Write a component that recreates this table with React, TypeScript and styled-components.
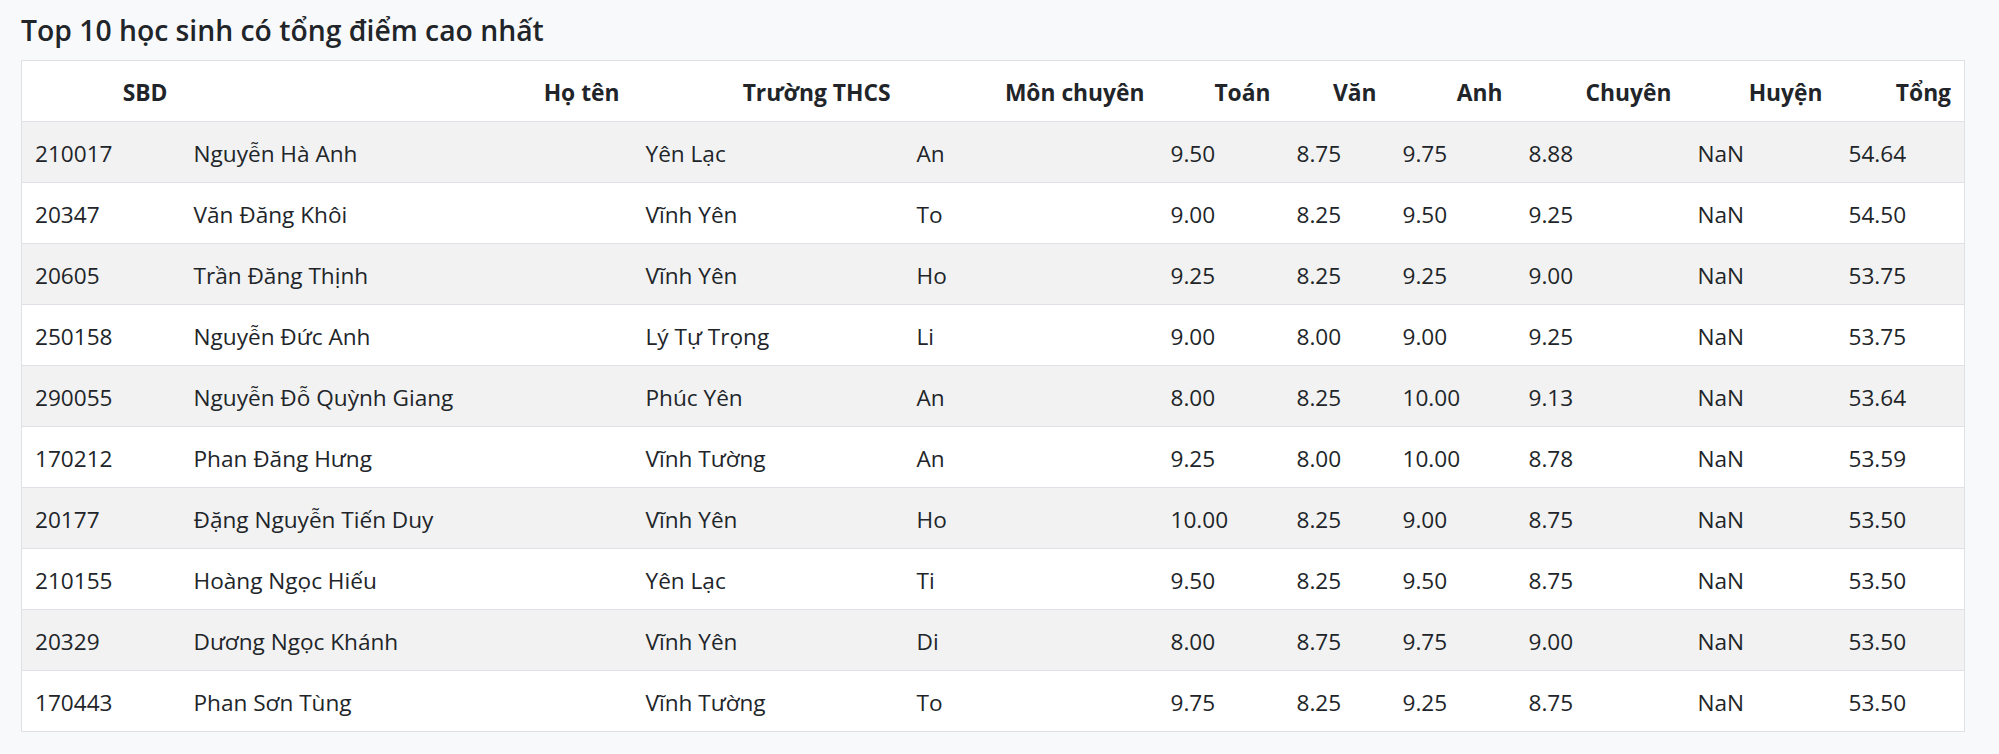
import React from "react";
import styled, { createGlobalStyle } from "styled-components";

const GlobalStyle = createGlobalStyle`
  html, body {
    margin: 0;
    padding: 0;
    background: #f8f9fa;
  }
  body {
    font-family: "Open Sans", "Noto Sans", sans-serif;
    color: #212529;
  }
`;

const Page = styled.main`
  padding: 10px 35px 23px 21px;
  background: #f8f9fa;
`;

const Title = styled.h2`
  margin: 0 0 9px 0;
  font-family: "Open Sans", "Noto Sans", sans-serif;
  font-size: 28.3px;
  font-weight: 600;
  line-height: 41px;
  color: #212529;
`;

const Table = styled.table`
  width: 1943px;
  border-collapse: collapse;
  table-layout: fixed;
  background: #ffffff;
  border: 1px solid #dee2e6;
`;

const HeadCell = styled.th`
  box-sizing: border-box;
  height: 61px;
  padding: 2px 13px 0 13px;
  text-align: right;
  font-size: 22.8px;
  font-weight: 700;
  vertical-align: middle;
  border-bottom: 1px solid #dee2e6;
  white-space: nowrap;
`;

const Row = styled.tr`
  &:nth-of-type(odd) {
    background: #f2f2f2;
  }
`;

const Cell = styled.td`
  box-sizing: border-box;
  height: 61px;
  padding: 2px 13px 0 13px;
  text-align: left;
  font-size: 22.6px;
  font-weight: 400;
  vertical-align: middle;
  border-bottom: 1px solid #dee2e6;
  white-space: nowrap;
`;

const columns: { label: string; width: number }[] = [
  { label: "SBD", width: 159 },
  { label: "Họ tên", width: 452 },
  { label: "Trường THCS", width: 271 },
  { label: "Môn chuyên", width: 254 },
  { label: "Toán", width: 126 },
  { label: "Văn", width: 106 },
  { label: "Anh", width: 126 },
  { label: "Chuyên", width: 169 },
  { label: "Huyện", width: 151 },
  { label: "Tổng", width: 129 },
];

const rows: string[][] = [
  ["210017", "Nguyễn Hà Anh", "Yên Lạc", "An", "9.50", "8.75", "9.75", "8.88", "NaN", "54.64"],
  ["20347", "Văn Đăng Khôi", "Vĩnh Yên", "To", "9.00", "8.25", "9.50", "9.25", "NaN", "54.50"],
  ["20605", "Trần Đăng Thịnh", "Vĩnh Yên", "Ho", "9.25", "8.25", "9.25", "9.00", "NaN", "53.75"],
  ["250158", "Nguyễn Đức Anh", "Lý Tự Trọng", "Li", "9.00", "8.00", "9.00", "9.25", "NaN", "53.75"],
  ["290055", "Nguyễn Đỗ Quỳnh Giang", "Phúc Yên", "An", "8.00", "8.25", "10.00", "9.13", "NaN", "53.64"],
  ["170212", "Phan Đăng Hưng", "Vĩnh Tường", "An", "9.25", "8.00", "10.00", "8.78", "NaN", "53.59"],
  ["20177", "Đặng Nguyễn Tiến Duy", "Vĩnh Yên", "Ho", "10.00", "8.25", "9.00", "8.75", "NaN", "53.50"],
  ["210155", "Hoàng Ngọc Hiếu", "Yên Lạc", "Ti", "9.50", "8.25", "9.50", "8.75", "NaN", "53.50"],
  ["20329", "Dương Ngọc Khánh", "Vĩnh Yên", "Di", "8.00", "8.75", "9.75", "9.00", "NaN", "53.50"],
  ["170443", "Phan Sơn Tùng", "Vĩnh Tường", "To", "9.75", "8.25", "9.25", "8.75", "NaN", "53.50"],
];

export default function App() {
  return (
    <>
      <GlobalStyle />
      <Page>
        <Title>Top 10 học sinh có tổng điểm cao nhất</Title>
        <Table>
          <colgroup>
            {columns.map((c) => (
              <col key={c.label} style={{ width: c.width }} />
            ))}
          </colgroup>
          <thead>
            <tr>
              {columns.map((c) => (
                <HeadCell key={c.label}>{c.label}</HeadCell>
              ))}
            </tr>
          </thead>
          <tbody>
            {rows.map((r) => (
              <Row key={r[0]}>
                {r.map((v, i) => (
                  <Cell key={i}>{v}</Cell>
                ))}
              </Row>
            ))}
          </tbody>
        </Table>
      </Page>
    </>
  );
}
